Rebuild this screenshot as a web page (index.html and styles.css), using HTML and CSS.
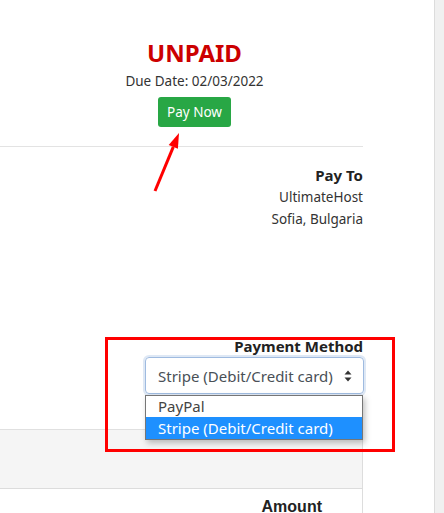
FILE: index.html
```html
<!DOCTYPE html>
<html lang="en">
<head>
    <meta charset="UTF-8">
    <meta name="viewport" content="width=device-width, initial-scale=1.0">
    <title>Invoice</title>

    <link rel="stylesheet" href="styles.css">
</head>
<body>
    <div class="frame">
        <div class="sheet">
            <div class="invoice">
                <div class="status">
                    <h1 class="unpaid">UNPAID</h1>
                    <div class="due">Due Date: 02/03/2022</div>
                    <button class="pay-btn">Pay Now</button>
                </div>

                <hr class="divider">

                <div class="pay-to">
                    <strong>Pay To</strong>
                    <div>UltimateHost</div>
                    <div>Sofia, Bulgaria</div>
                </div>

                <div class="method">
                    <strong>Payment Method</strong>
                    <div class="select-wrap">
                        <div class="select-box">
                            <span>Stripe (Debit/Credit card)</span>
                            <svg class="updown" width="8" height="12" viewBox="0 0 8 12">
                                <path d="M4 0.5 L7.5 4.5 L0.5 4.5 Z M4 11.5 L7.5 7.5 L0.5 7.5 Z" fill="#333"/>
                            </svg>
                        </div>
                        <!-- open dropdown list -->
                        <ul class="options">
                            <li>PayPal</li>
                            <li class="active">Stripe (Debit/Credit card)</li>
                        </ul>
                    </div>
                </div>

                <table class="items">
                    <thead>
                        <tr class="band"><td></td></tr>
                    </thead>
                    <tbody>
                        <tr><th>Amount</th></tr>
                    </tbody>
                </table>
            </div>

            <!-- annotations -->
            <svg class="arrow" width="200" height="200" viewBox="0 0 200 200">
                <line x1="155" y1="191" x2="173.3" y2="146.9" stroke="#ff0000" stroke-width="3"/>
                <polygon points="179,133 177.9,148.8 168.7,145" fill="#ff0000"/>
            </svg>
            <div class="highlight"></div>
        </div>
        <div class="rail"></div>
    </div>
</body>
</html>
```

FILE: styles.css
```css
/* page frame */
html, body {
    margin: 0;
    padding: 0;
}

body {
    font-family: "Noto Sans", "Open Sans", sans-serif;
    font-size: 13.5px;
    color: #333;
    background: #fff;
}

.frame {
    display: flex;
    height: 513px;
    overflow: hidden;
}

.sheet {
    position: relative;
    width: 434px;
    border-right: 1px solid #dcdcdc;
    background: #fff;
}

.rail {
    flex: 1;
    background: #f0f0f0;
}

.invoice {
    width: 363px;
}

/* status */
.status {
    padding-left: 26px;
    padding-top: 38px;
    text-align: center;
}

.unpaid {
    margin: 0;
    font-size: 24px;
    line-height: 30px;
    font-weight: 700;
    color: #cc0000;
}

.due {
    margin-top: 3px;
    line-height: 20px;
}

.pay-btn {
    margin-top: 6px;
    height: 30px;
    padding: 0 9px;
    border: 0;
    border-radius: 3px;
    background: #28a745;
    color: #fff;
    font-family: inherit;
    font-size: 13.5px;
}

.divider {
    margin: 19px 0 0;
    border: 0;
    border-top: 1px solid #e3e3e3;
}

/* addresses */
.pay-to {
    margin-top: 17px;
    text-align: right;
    line-height: 22px;
}

.pay-to strong,
.method strong {
    display: block;
    font-size: 15px;
    color: #222;
}

.method {
    margin-top: 106px;
    text-align: right;
    line-height: 20px;
}

.select-wrap {
    position: relative;
    width: 219px;
    margin: 1px -1px 0 auto;
}

.select-box {
    display: flex;
    align-items: center;
    justify-content: space-between;
    height: 37px;
    box-sizing: border-box;
    padding: 0 11px 0 12px;
    border: 1px solid #9fbbe0;
    border-radius: 4px;
    box-shadow: 0 0 0 2px rgba(160, 190, 225, 0.35);
    font-size: 15px;
    color: #495057;
}

.options {
    position: absolute;
    top: 38px;
    left: 0;
    right: 1px;
    margin: 0;
    padding: 0;
    list-style: none;
    text-align: left;
    background: #fff;
    border: 1px solid #767676;
    box-shadow: 2px 3px 6px rgba(0, 0, 0, 0.25);
    font-size: 15px;
    color: #444;
}

.options li {
    padding: 0 12px;
    line-height: 21px;
}

.options li.active {
    line-height: 22px;
    background: #1e90ff;
    color: #fff;
}

/* items table */
.items {
    width: 100%;
    margin-top: 35px;
    border-collapse: collapse;
}

.items td,
.items th {
    padding: 0;
    border-right: 1px solid #dddddd;
}

.band td {
    height: 58px;
    background: #f5f5f5;
    border-top: 1px solid #e0e0e0;
    border-bottom: 1px solid #dcdcdc;
}

.items th {
    padding: 8px 40px 0 0;
    line-height: 20px;
    text-align: right;
    font-family: "Liberation Sans", Arial, sans-serif;
    font-size: 16px;
    color: #222;
}

/* annotations */
.arrow {
    position: absolute;
    top: 0;
    left: 0;
    pointer-events: none;
}

.highlight {
    position: absolute;
    left: 105px;
    top: 337px;
    width: 284px;
    height: 109px;
    border: 3px solid #ff0000;
    pointer-events: none;
}
```
